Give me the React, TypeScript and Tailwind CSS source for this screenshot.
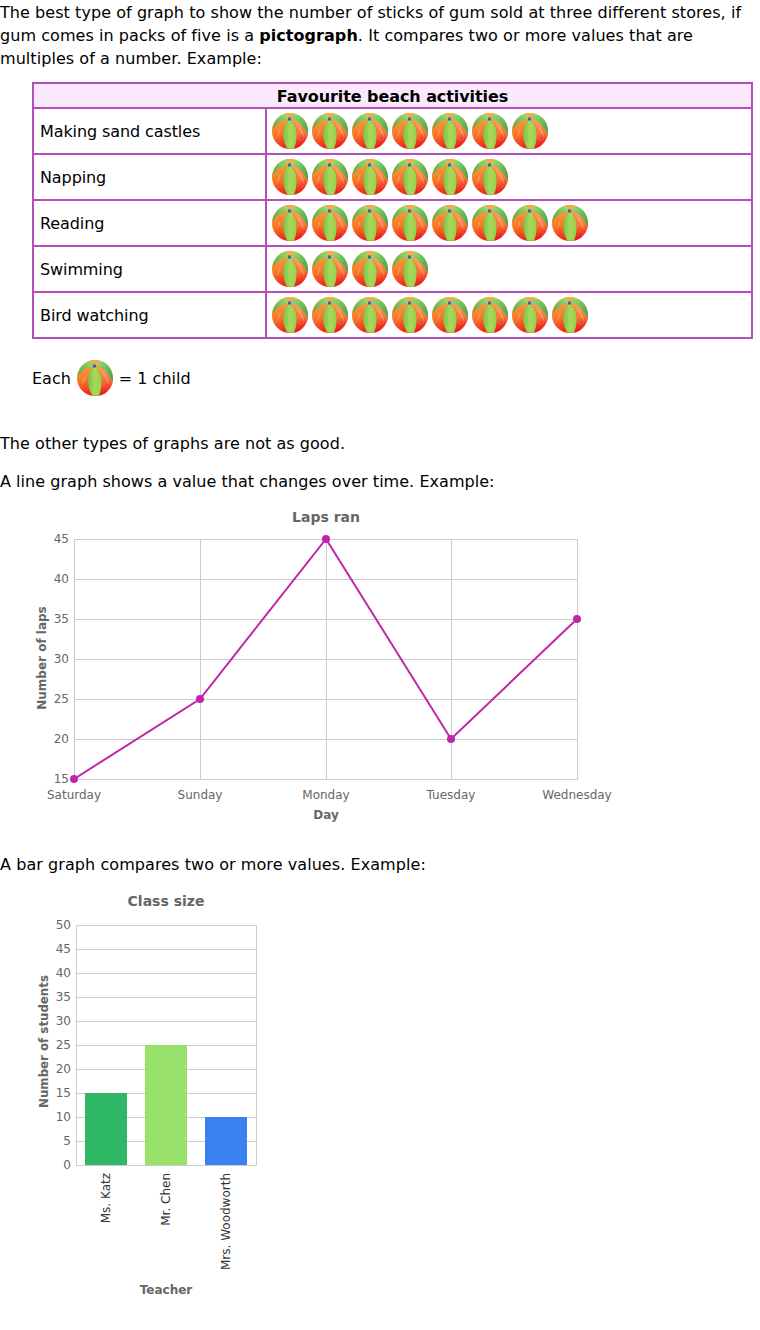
import React, { useId } from 'react';

const Ball: React.FC = () => {
  const id = useId();
  return (
    <svg viewBox="0 0 36 36" className="block w-9 h-9 shrink-0">
      <defs>
        <linearGradient id={`${id}o`} x1="0.3" y1="0.1" x2="0.5" y2="1">
          <stop offset="0" stopColor="#fba040" />
          <stop offset="0.5" stopColor="#f97326" />
          <stop offset="0.9" stopColor="#ee2a1c" />
        </linearGradient>
        <linearGradient id={`${id}r`} x1="0.4" y1="0" x2="0.5" y2="1">
          <stop offset="0" stopColor="#fba85a" />
          <stop offset="0.5" stopColor="#f8743a" />
          <stop offset="0.9" stopColor="#ec1f1c" />
        </linearGradient>
        <linearGradient id={`${id}g`} x1="0" y1="0" x2="1" y2="0">
          <stop offset="0" stopColor="#74c44a" />
          <stop offset="0.5" stopColor="#aad858" />
          <stop offset="1" stopColor="#94d04c" />
        </linearGradient>
        <linearGradient id={`${id}t`} x1="0" y1="0" x2="1" y2="0.7">
          <stop offset="0" stopColor="#a6e076" />
          <stop offset="1" stopColor="#3fae4c" />
        </linearGradient>
        <linearGradient id={`${id}l`} x1="1" y1="0" x2="0" y2="0.7">
          <stop offset="0" stopColor="#a6e076" />
          <stop offset="1" stopColor="#4ab44a" />
        </linearGradient>
      </defs>
      <circle cx="18" cy="18" r="18" fill={`url(#${id}o)`} />
      <path d="M18 0.500C24 0.500 28 2.500 31 5.500C34 9 35.500 13 36 18L35.500 22C32 13 26 7.500 18.500 5.500Z" fill={`url(#${id}t)`} />
      <path d="M15 0.300C8 1.500 2 7 0.200 17.500C3 11.500 9 7 17.500 5.500Z" fill={`url(#${id}l)`} />
      <path d="M13 0.500C16 -0.200 20 -0.200 22.500 0.600L20 5H16.500Z" fill="#fba848" />
      <path d="M17.500 6C13 10 10.800 16 11.200 22.500C11.600 28 13.500 33 15.500 35.800H22C24 31 25 25 24.500 19.500C24 14 21.500 9.500 17.500 6Z" fill={`url(#${id}g)`} />
      <path d="M19 6C23.500 9.500 25.500 15 25.500 21C25.500 27 24 32 22 35.600C28 35 33 30 35.600 22.500C33 14 27 8 19 6Z" fill={`url(#${id}r)`} />
      <path d="M25 11C28 13.500 31 18 32 24C29 20 27 15.500 25 11Z" fill="#fdd0a8" opacity="0.5" />
      <path d="M9 14C6.500 17 5 21 5 25C7 22 8.500 18 9 14Z" fill="#fdc090" opacity="0.4" />
      <rect x="16" y="4.500" width="3" height="3" fill="#1f6fb8" />
    </svg>
  );
};

const rows: [string, number][] = [
  ['Making sand castles', 7],
  ['Napping', 6],
  ['Reading', 8],
  ['Swimming', 4],
  ['Bird watching', 8],
];

const LineChart: React.FC = () => {
  const yTicks = [45, 40, 35, 30, 25, 20, 15];
  const days = ['Saturday', 'Sunday', 'Monday', 'Tuesday', 'Wednesday'];
  const xs = [74, 200, 326, 451, 577];
  const ys = [274, 194, 34, 234, 114];
  return (
    <svg width="760" height="330" className="block">
      <text x="326" y="17" textAnchor="middle" fontSize="14" fontWeight="700" fill="#666">Laps ran</text>
      {yTicks.map((t, i) => (
        <g key={t}>
          <line x1="74" x2="577" y1={34.5 + i * 40} y2={34.5 + i * 40} stroke="#cccccc" />
          <text x="69" y={38 + i * 40} textAnchor="end" fontSize="12" fill="#666">{t}</text>
        </g>
      ))}
      {xs.map((x, i) => (
        <g key={x}>
          <line x1={x + 0.5} x2={x + 0.5} y1="34" y2="275" stroke="#cccccc" />
          <text x={x} y="294" textAnchor="middle" fontSize="12" fill="#666">{days[i]}</text>
        </g>
      ))}
      <text x="326" y="314" textAnchor="middle" fontSize="12" fontWeight="700" fill="#666">Day</text>
      <text transform="translate(46 153) rotate(-90)" textAnchor="middle" fontSize="12" fontWeight="700" fill="#666">Number of laps</text>
      <polyline points={xs.map((x, i) => `${x},${ys[i]}`).join(' ')} fill="none" stroke="#c026a8" strokeWidth="2" />
      {xs.map((x, i) => (
        <circle key={x} cx={x} cy={ys[i]} r="4" fill="#c026a8" />
      ))}
    </svg>
  );
};

const BarChart: React.FC = () => {
  const ticks = [50, 45, 40, 35, 30, 25, 20, 15, 10, 5, 0];
  const bars = [
    { label: 'Ms. Katz', x: 85, h: 72, c: '#2eb866', tx: 110 },
    { label: 'Mr. Chen', x: 145, h: 120, c: '#98e26c', tx: 170 },
    { label: 'Mrs. Woodworth', x: 205, h: 48, c: '#3b82f0', tx: 230 },
  ];
  return (
    <svg width="760" height="430" className="block">
      <text x="166" y="21" textAnchor="middle" fontSize="14" fontWeight="700" fill="#666">Class size</text>
      {ticks.map((t, i) => (
        <g key={t}>
          <line x1="76" x2="256" y1={40.5 + i * 24} y2={40.5 + i * 24} stroke="#cccccc" />
          <text x="71" y={43.5 + i * 24} textAnchor="end" fontSize="12" fill="#666">{t}</text>
        </g>
      ))}
      <line x1="76.500" x2="76.500" y1="40" y2="280" stroke="#cccccc" />
      <line x1="256.500" x2="256.500" y1="40" y2="281" stroke="#cccccc" />
      {bars.map((b) => (
        <g key={b.label}>
          <rect x={b.x} y={280 - b.h} width="42" height={b.h} fill={b.c} />
          <text transform={`translate(${b.tx} 288) rotate(-90)`} textAnchor="end" fontSize="12" fill="#333">{b.label}</text>
        </g>
      ))}
      <text x="166" y="409" textAnchor="middle" fontSize="12" fontWeight="700" fill="#666">Teacher</text>
      <text transform="translate(48 156.500) rotate(-90)" textAnchor="middle" fontSize="11.800" fontWeight="700" fill="#666">Number of students</text>
    </svg>
  );
};

const App: React.FC = () => {
  return (
    <div className="w-[760px] h-[1330px] overflow-hidden bg-white text-black text-base leading-[23px] pt-px font-['DejaVu_Sans',Verdana,sans-serif]">
      <p className="pr-2 tracking-[0.06px]">
        The best type of graph to show the number of sticks of gum sold at three different stores, if gum comes in packs of five is a <b>pictograph</b>. It compares two or more values that are multiples of a number. Example:
      </p>

      {/* Pictograph */}
      <table className="mt-3 ml-8 w-[721px] border-collapse">
        <thead>
          <tr>
            <th colSpan={2} className="h-[25px] p-0 pt-[3px] border-2 border-[#b14fbb] bg-[#fce8fd] font-bold leading-5 text-center tracking-[-0.08px]">
              Favourite beach activities
            </th>
          </tr>
        </thead>
        <tbody>
          {rows.map(([label, count]) => (
            <tr key={label} className="h-[46px]">
              <td className="w-[233px] border-2 border-[#b14fbb] pl-[6px] pr-1 py-0 tracking-[-0.1px]">{label}</td>
              <td className="border-2 border-[#b14fbb] pl-[5px] py-0">
                <div className="flex gap-1">
                  {Array.from({ length: count }).map((_, i) => (
                    <Ball key={i} />
                  ))}
                </div>
              </td>
            </tr>
          ))}
        </tbody>
      </table>

      <div className="mt-[21px] ml-8 flex items-center gap-[6px]">
        <span>Each</span>
        <Ball />
        <span>= 1 child</span>
      </div>

      <p className="mt-9 tracking-[0.05px]">The other types of graphs are not as good.</p>
      <p className="mt-[15px] tracking-[0.04px]">A line graph shows a value that changes over time. Example:</p>

      <div className="mt-3">
        <LineChart />
      </div>

      <p className="mt-[18px] tracking-[0.07px]">A bar graph compares two or more values. Example:</p>
      <div className="mt-[9px]">
        <BarChart />
      </div>
    </div>
  );
};

export default App;
